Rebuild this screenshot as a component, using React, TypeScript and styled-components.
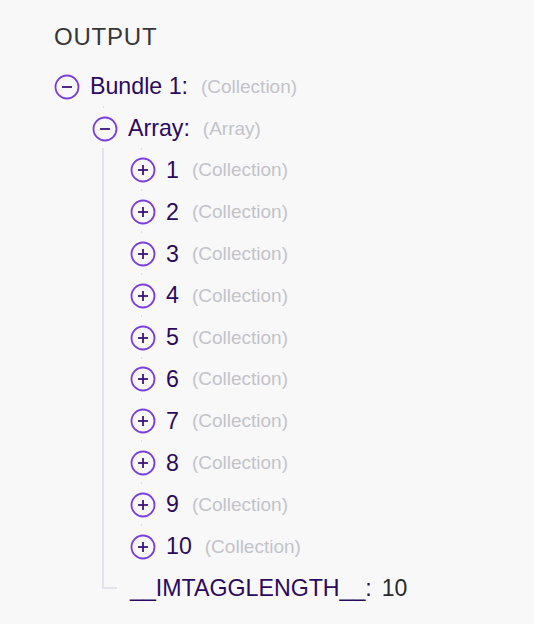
import React from "react";
import styled, { createGlobalStyle } from "styled-components";

const GlobalStyle = createGlobalStyle`
  html, body {
    margin: 0;
    background: #f8f8f9;
    font-family: "Liberation Sans", Arial, sans-serif;
  }
`;

const Page = styled.div`
  padding: 23px 0 0 54px;
  min-height: 624px;
  box-sizing: border-box;
`;

const Title = styled.h2`
  margin: 0 0 15px;
  font-size: 24px;
  font-weight: 400;
  letter-spacing: 0.8px;
  color: #363636;
  line-height: 28px;
`;

const Row = styled.div<{ $tick?: boolean }>`
  position: relative;
  display: flex;
  align-items: center;
  height: 41.8px;
  white-space: nowrap;

  &::before {
    content: "";
    position: absolute;
    top: -2px;
    left: 11px;
    width: 1px;
    height: 2px;
    background: ${(p) => (p.$tick ? "#dcdce2" : "transparent")};
  }
`;

const Toggle = styled.svg`
  flex: none;
  width: 26px;
  height: 26px;
  margin-right: 10px;
`;

const Label = styled.span`
  font-size: 23.2px;
  color: #2b0a5e;
`;

const Value = styled.span`
  font-size: 23px;
  color: #2a2a2a;
  margin-left: 10px;
`;

const Type = styled.span`
  font-size: 19px;
  color: #c3c3ca;
  margin-left: 13px;
`;

const Children = styled.div<{ $guide?: boolean }>`
  position: relative;
  padding-left: 38px;

  &::before {
    content: "";
    display: ${(p) => (p.$guide ? "block" : "none")};
    position: absolute;
    left: 10px;
    top: -2px;
    bottom: 20px;
    width: 13px;
    border-left: 2px solid #e3e3e9;
    border-bottom: 2px solid #e3e3e9;
  }
`;

const ToggleIcon = ({ open }: { open: boolean }) => (
  <Toggle viewBox="0 0 26 26">
    <circle cx="13" cy="13" r="11.5" fill="none" stroke="#7a3ee0" strokeWidth="1.8" />
    <line x1="8" y1="13" x2="18" y2="13" stroke="#3b1578" strokeWidth="1.8" />
    {!open && <line x1="13" y1="8" x2="13" y2="18" stroke="#3b1578" strokeWidth="1.8" />}
  </Toggle>
);

const items = Array.from({ length: 10 }, (_, i) => String(i + 1));

export default function App() {
  return (
    <>
      <GlobalStyle />
      <Page>
        <Title>OUTPUT</Title>

        <Row>
          <ToggleIcon open />
          <Label>Bundle 1:</Label>
          <Type>(Collection)</Type>
        </Row>

        <Children>
          <Row $tick>
            <ToggleIcon open />
            <Label>Array:</Label>
            <Type>(Array)</Type>
          </Row>

          <Children $guide>
            {items.map((n) => (
              <Row key={n} $tick>
                <ToggleIcon open={false} />
                <Label>{n}</Label>
                <Type>(Collection)</Type>
              </Row>
            ))}
            <Row>
              <Label>__IMTAGGLENGTH__:</Label>
              <Value>10</Value>
            </Row>
          </Children>
        </Children>
      </Page>
    </>
  );
}
